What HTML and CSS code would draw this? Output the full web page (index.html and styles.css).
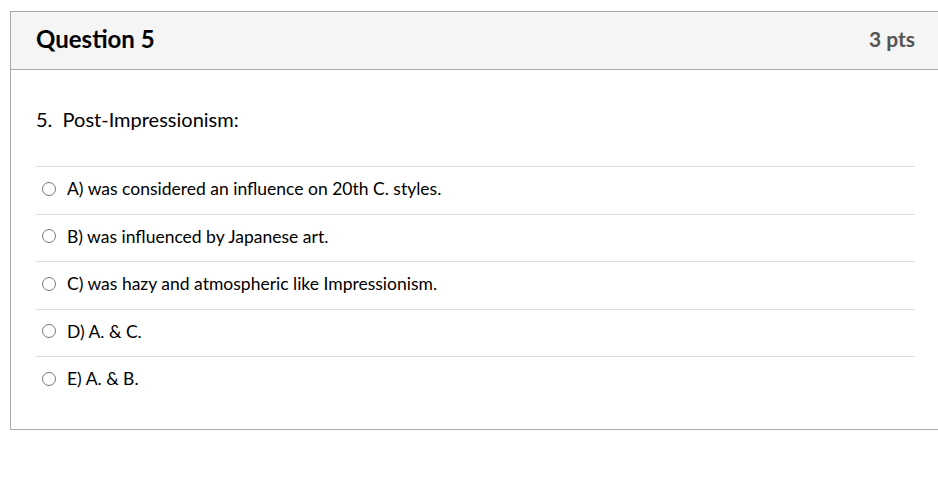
FILE: index.html
```html
<!DOCTYPE html>
<html>
<head>
<meta charset="utf-8">
<link rel="stylesheet" href="styles.css">
</head>
<body>
<div class="page">
  <div class="card">
    <div class="card-header">
      <h2 class="title">Question 5</h2>
      <div class="pts">3 pts</div>
    </div>
    <div class="card-body">
      <p class="question">5.&nbsp; Post-Impressionism:</p>
      <ul class="answers">
        <li class="answer"><span class="radio"></span><span class="label">A) was considered an influence on 20th C. styles.</span></li>
        <li class="answer"><span class="radio"></span><span class="label">B) was influenced by Japanese art.</span></li>
        <li class="answer"><span class="radio"></span><span class="label">C) was hazy and atmospheric like Impressionism.</span></li>
        <li class="answer"><span class="radio"></span><span class="label">D) A. &amp; C.</span></li>
        <li class="answer"><span class="radio"></span><span class="label">E) A. &amp; B.</span></li>
      </ul>
    </div>
  </div>
</div>
</body>
</html>
```
FILE: styles.css
```css
html, body {
  margin: 0;
  padding: 0;
  overflow: hidden;
  background: #fff;
}
body {
  font-family: Lato, "Liberation Sans", sans-serif;
  color: #111;
}
.page {
  padding: 11px 0 0 10px;
  width: 960px;
}
.card {
  border: 1px solid #aaaaaa;
  box-sizing: border-box;
  width: 931px;
}
.card-header {
  height: 58px;
  box-sizing: border-box;
  background: #f5f5f5;
  border-bottom: 1px solid #aaaaaa;
  display: flex;
  align-items: center;
  justify-content: space-between;
  padding: 0 25px 5px;
}
.title {
  margin: 0;
  font-size: 24px;
  font-weight: 700;
  color: #000;
}
.pts {
  font-size: 21px;
  font-weight: 700;
  color: #555;
}
.card-body {
  padding: 37px 25px 25px;
}
.question {
  margin: 0 0 35px;
  font-size: 20px;
  line-height: 24px;
  color: #000;
}
.answers {
  list-style: none;
  margin: 0;
  padding: 0;
}
.answer {
  border-top: 1px solid #dddddd;
  height: 43.5px;
  padding-bottom: 3px;
  display: flex;
  align-items: center;
  padding-left: 6px;
  gap: 11px;
}
.radio {
  width: 12px;
  height: 12px;
  border: 1px solid #777;
  border-radius: 50%;
  flex: none;
}
.label {
  font-size: 17.5px;
  color: #000;
}
```
